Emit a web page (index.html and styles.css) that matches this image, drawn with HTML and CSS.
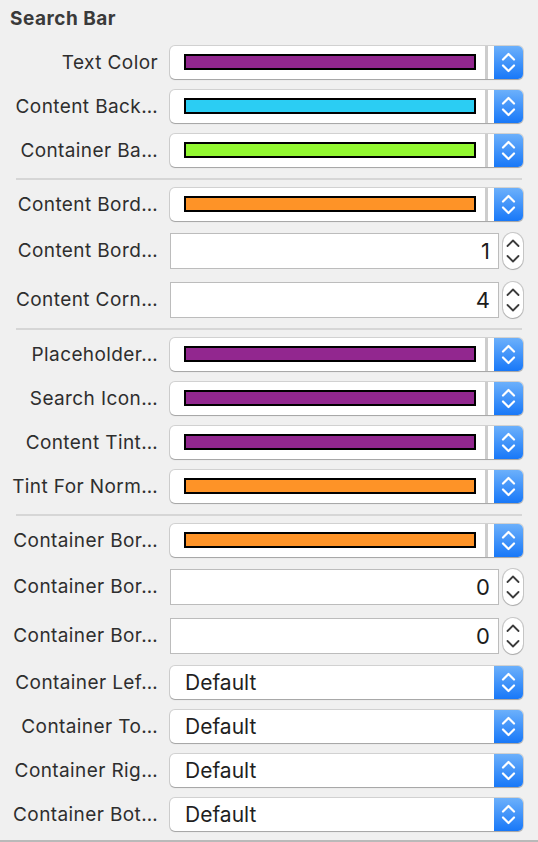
FILE: index.html
```html
<!DOCTYPE html>
<html>
<head>
<meta charset="utf-8">
<link rel="stylesheet" href="styles.css">
</head>
<body>
<div class="panel">
  <div class="title">Search Bar</div>

  <div class="row">
    <div class="label">Text Color</div>
    <div class="popup"><span class="swatch" style="background:#92278f"></span><span class="divider"></span><span class="btn"><svg width="29" height="33" viewBox="0 0 29 33"><path d="M9 13.5 L14.5 8 L20 13.5 M9 19.5 L14.5 25 L20 19.5"/></svg></span></div>
  </div>
  <div class="row">
    <div class="label">Content Back…</div>
    <div class="popup"><span class="swatch" style="background:#2bcdf3"></span><span class="divider"></span><span class="btn"><svg width="29" height="33" viewBox="0 0 29 33"><path d="M9 13.5 L14.5 8 L20 13.5 M9 19.5 L14.5 25 L20 19.5"/></svg></span></div>
  </div>
  <div class="row">
    <div class="label">Container Ba…</div>
    <div class="popup"><span class="swatch" style="background:#92f731"></span><span class="divider"></span><span class="btn"><svg width="29" height="33" viewBox="0 0 29 33"><path d="M9 13.5 L14.5 8 L20 13.5 M9 19.5 L14.5 25 L20 19.5"/></svg></span></div>
  </div>

  <div class="sep"></div>

  <div class="row">
    <div class="label">Content Bord…</div>
    <div class="popup"><span class="swatch" style="background:#fe9327"></span><span class="divider"></span><span class="btn"><svg width="29" height="33" viewBox="0 0 29 33"><path d="M9 13.5 L14.5 8 L20 13.5 M9 19.5 L14.5 25 L20 19.5"/></svg></span></div>
  </div>
  <div class="row num">
    <div class="label">Content Bord…</div>
    <div class="numctl"><div class="field">1</div><div class="stepper"><svg width="20" height="36" viewBox="0 0 20 36"><path d="M4.5 13 L10 7.5 L15.5 13 M4.5 23 L10 28.5 L15.5 23"/></svg></div></div>
  </div>
  <div class="row num">
    <div class="label">Content Corn…</div>
    <div class="numctl"><div class="field">4</div><div class="stepper"><svg width="20" height="36" viewBox="0 0 20 36"><path d="M4.5 13 L10 7.5 L15.5 13 M4.5 23 L10 28.5 L15.5 23"/></svg></div></div>
  </div>

  <div class="sep sep-tight"></div>

  <div class="row">
    <div class="label">Placeholder…</div>
    <div class="popup"><span class="swatch" style="background:#92278f"></span><span class="divider"></span><span class="btn"><svg width="29" height="33" viewBox="0 0 29 33"><path d="M9 13.5 L14.5 8 L20 13.5 M9 19.5 L14.5 25 L20 19.5"/></svg></span></div>
  </div>
  <div class="row">
    <div class="label">Search Icon…</div>
    <div class="popup"><span class="swatch" style="background:#92278f"></span><span class="divider"></span><span class="btn"><svg width="29" height="33" viewBox="0 0 29 33"><path d="M9 13.5 L14.5 8 L20 13.5 M9 19.5 L14.5 25 L20 19.5"/></svg></span></div>
  </div>
  <div class="row">
    <div class="label">Content Tint…</div>
    <div class="popup"><span class="swatch" style="background:#92278f"></span><span class="divider"></span><span class="btn"><svg width="29" height="33" viewBox="0 0 29 33"><path d="M9 13.5 L14.5 8 L20 13.5 M9 19.5 L14.5 25 L20 19.5"/></svg></span></div>
  </div>
  <div class="row">
    <div class="label">Tint For Norm…</div>
    <div class="popup"><span class="swatch" style="background:#fe9327"></span><span class="divider"></span><span class="btn"><svg width="29" height="33" viewBox="0 0 29 33"><path d="M9 13.5 L14.5 8 L20 13.5 M9 19.5 L14.5 25 L20 19.5"/></svg></span></div>
  </div>

  <div class="sep"></div>

  <div class="row">
    <div class="label">Container Bor…</div>
    <div class="popup"><span class="swatch" style="background:#fe9327"></span><span class="divider"></span><span class="btn"><svg width="29" height="33" viewBox="0 0 29 33"><path d="M9 13.5 L14.5 8 L20 13.5 M9 19.5 L14.5 25 L20 19.5"/></svg></span></div>
  </div>
  <div class="row num">
    <div class="label">Container Bor…</div>
    <div class="numctl"><div class="field">0</div><div class="stepper"><svg width="20" height="36" viewBox="0 0 20 36"><path d="M4.5 13 L10 7.5 L15.5 13 M4.5 23 L10 28.5 L15.5 23"/></svg></div></div>
  </div>
  <div class="row num">
    <div class="label">Container Bor…</div>
    <div class="numctl"><div class="field">0</div><div class="stepper"><svg width="20" height="36" viewBox="0 0 20 36"><path d="M4.5 13 L10 7.5 L15.5 13 M4.5 23 L10 28.5 L15.5 23"/></svg></div></div>
  </div>
  <div class="row">
    <div class="label">Container Lef…</div>
    <div class="popup"><span class="value">Default</span><span class="btn"><svg width="29" height="33" viewBox="0 0 29 33"><path d="M9 13.5 L14.5 8 L20 13.5 M9 19.5 L14.5 25 L20 19.5"/></svg></span></div>
  </div>
  <div class="row">
    <div class="label">Container To…</div>
    <div class="popup"><span class="value">Default</span><span class="btn"><svg width="29" height="33" viewBox="0 0 29 33"><path d="M9 13.5 L14.5 8 L20 13.5 M9 19.5 L14.5 25 L20 19.5"/></svg></span></div>
  </div>
  <div class="row">
    <div class="label">Container Rig…</div>
    <div class="popup"><span class="value">Default</span><span class="btn"><svg width="29" height="33" viewBox="0 0 29 33"><path d="M9 13.5 L14.5 8 L20 13.5 M9 19.5 L14.5 25 L20 19.5"/></svg></span></div>
  </div>
  <div class="row">
    <div class="label">Container Bot…</div>
    <div class="popup"><span class="value">Default</span><span class="btn"><svg width="29" height="33" viewBox="0 0 29 33"><path d="M9 13.5 L14.5 8 L20 13.5 M9 19.5 L14.5 25 L20 19.5"/></svg></span></div>
  </div>

  <div class="footer-line"></div>
</div>
</body>
</html>
```

FILE: styles.css
```css
html, body {
  margin: 0;
  padding: 0;
  background: #f0f0f0;
}
body {
  font-family: Inter, "Noto Sans", "Liberation Sans", sans-serif;
  color: #2b2b2b;
  width: 538px;
  height: 842px;
  overflow: hidden;
}
.panel {
  display: flex;
  flex-direction: column;
}
.title {
  height: 40px;
  line-height: 38px;
  padding-left: 10px;
  font-size: 19px;
  letter-spacing: 0.5px;
  font-weight: 700;
  color: #3a3a3a;
}
.row {
  display: grid;
  grid-template-columns: 170px 353px;
  align-items: center;
  height: 44px;
}
.row.num {
  height: 49px;
}
.label {
  text-align: right;
  padding-right: 12px;
  font-size: 19px;
  letter-spacing: 0.4px;
  white-space: nowrap;
  overflow: hidden;
  color: #2e2e2e;
}
.popup {
  height: 33px;
  display: flex;
  align-items: center;
  background: #fff;
  border-radius: 5px;
  box-shadow: 0 0 0 1px rgba(0,0,0,0.13), 0 1px 1px rgba(0,0,0,0.22);
  overflow: hidden;
}
.swatch {
  box-sizing: border-box;
  margin-left: 14px;
  width: 292px;
  height: 16px;
  border: 2px solid #000;
  flex: none;
}
.divider {
  margin-left: 9px;
  width: 3px;
  align-self: stretch;
  background: #cdcdcd;
  flex: none;
}
.value {
  flex: 1;
  padding-left: 15px;
  font-size: 21px;
  color: #1f1f1f;
}
.btn {
  margin-left: auto;
  width: 29px;
  height: 33px;
  flex: none;
  background: linear-gradient(#6cb0fb, #1878f8);
  display: block;
}
.btn svg {
  display: block;
}
.btn path {
  fill: none;
  stroke: #fff;
  stroke-width: 2.2;
  stroke-linecap: round;
  stroke-linejoin: round;
}
.numctl {
  display: flex;
  align-items: center;
  gap: 4px;
}
.field {
  box-sizing: border-box;
  flex: 1;
  height: 36px;
  border: 1px solid #bcbcbc;
  background: #fff;
  text-align: right;
  padding-right: 8px;
  font-size: 22px;
  line-height: 34px;
  color: #1c1c1c;
}
.stepper {
  box-sizing: border-box;
  width: 20px;
  height: 36px;
  border-radius: 10px;
  background: #fff;
  box-shadow: 0 0 0 1px rgba(0,0,0,0.17), 0 1px 1px rgba(0,0,0,0.15);
}
.stepper svg {
  display: block;
}
.stepper path {
  fill: none;
  stroke: #3c3c3c;
  stroke-width: 1.8;
  stroke-linecap: round;
  stroke-linejoin: round;
}
.sep {
  height: 2px;
  background: #d6d6d6;
  margin: 6px 16px 2px 16px;
}
.sep-tight {
  margin-top: 4px;
}
.footer-line {
  height: 2px;
  background: #b9b9b9;
  margin-top: 4px;
}
```
